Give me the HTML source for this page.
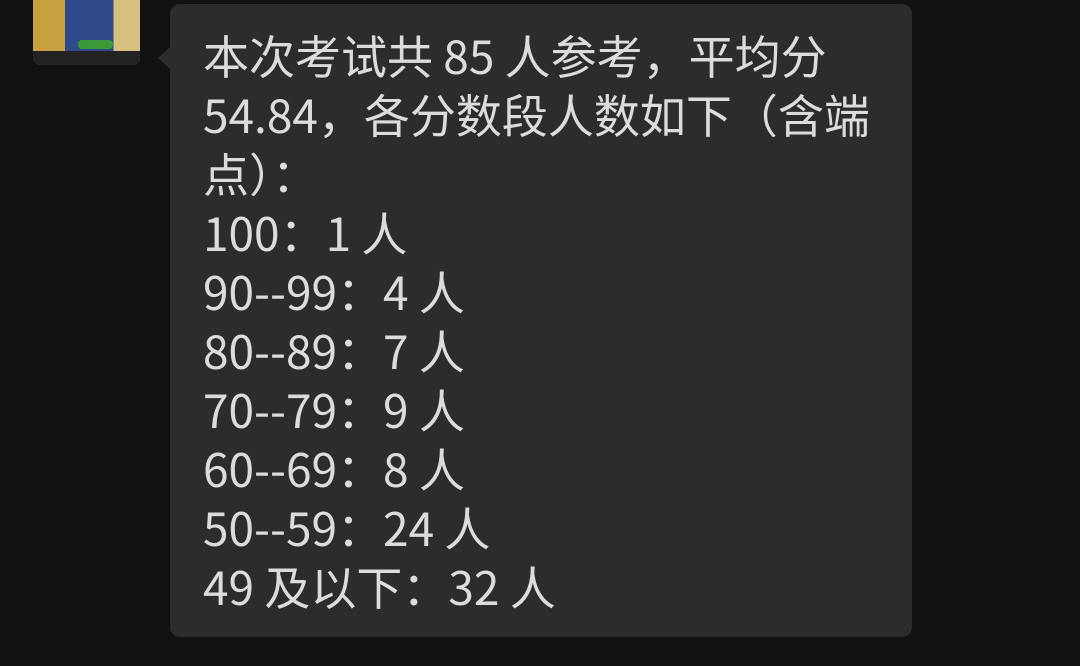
<!DOCTYPE html>
<html><head><meta charset="utf-8"><style>
body{margin:0;width:1080px;height:666px;background:#111111;overflow:hidden;position:relative;font-family:"Noto Sans CJK SC","Liberation Sans",sans-serif}
.av{position:absolute;left:33px;top:-10px;width:107px;height:75px;border-radius:8px;background:linear-gradient(90deg,#c9a040 0 30%,#2e4a8a 30% 75%,#d8c080 75%);overflow:hidden}
.av .b{position:absolute;left:0;right:0;bottom:0;height:14px;background:#222}
.av .g{position:absolute;left:45px;width:35px;top:50px;height:9px;background:#3a9a3a;border-radius:4px}
.bub{position:absolute;left:170px;top:4px;width:742px;height:633px;background:#2c2c2c;border-radius:10px}
.tail{position:absolute;left:158px;top:46px;width:0;height:0;border-top:12px solid transparent;border-bottom:12px solid transparent;border-right:13px solid #2c2c2c}
.t{position:absolute;left:203px;top:26px;width:700px;font-size:46px;line-height:59px;color:#dcdcdc;white-space:pre}
</style></head><body>
<div class="av"><div class="g"></div><div class="b"></div></div>
<div class="tail"></div>
<div class="bub"></div>
<div class="t">本次考试共 85 人参考，平均分
54.84，各分数段人数如下（含端
点）：
100：1 人
90--99：4 人
80--89：7 人
70--79：9 人
60--69：8 人
50--59：24 人
49 及以下：32 人</div>
</body></html>
